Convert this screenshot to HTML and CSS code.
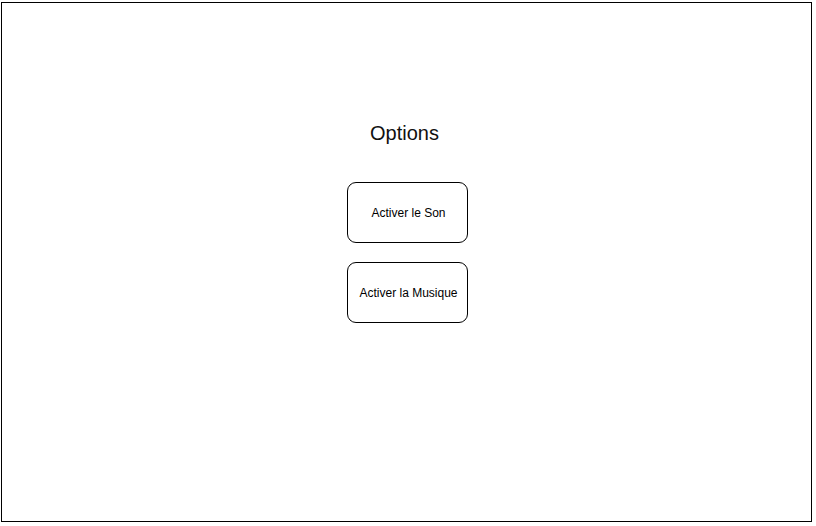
FILE: index.html
```html
<!DOCTYPE html>
<html lang="fr">
<head>
<meta charset="utf-8">
<title>Options</title>
<link rel="stylesheet" href="styles.css">
</head>
<body>
<div class="frame">
  <h1 class="title">Options</h1>
  <div class="buttons">
    <button class="btn">Activer le Son</button>
    <button class="btn">Activer la Musique</button>
  </div>
</div>
</body>
</html>
```
FILE: styles.css
```css
html, body {
  margin: 0;
  padding: 0;
  background: #ffffff;
}
body {
  font-family: "Liberation Sans", Arial, sans-serif;
  color: #000;
}
.frame {
  box-sizing: border-box;
  margin: 2px 0 0 1px;
  width: 811px;
  height: 520px;
  border: 1px solid #000;
  display: flex;
  flex-direction: column;
  align-items: center;
  padding-top: 119px;
}
.title {
  margin: 0 4px 0 0;
  font-size: 20px;
  font-weight: normal;
  line-height: 23px;
  color: #111;
}
.buttons {
  display: flex;
  flex-direction: column;
  gap: 20px;
  margin-top: 37px;
  margin-left: 2px;
}
.btn {
  box-sizing: border-box;
  width: 121px;
  height: 61px;
  border: 1px solid #000;
  border-radius: 9px;
  background: #fff;
  font-family: "Liberation Sans", Arial, sans-serif;
  font-size: 12px;
  color: #000;
  padding: 0 0 0 2px;
}
.btn + .btn {
  margin-top: -1px;
}
```
